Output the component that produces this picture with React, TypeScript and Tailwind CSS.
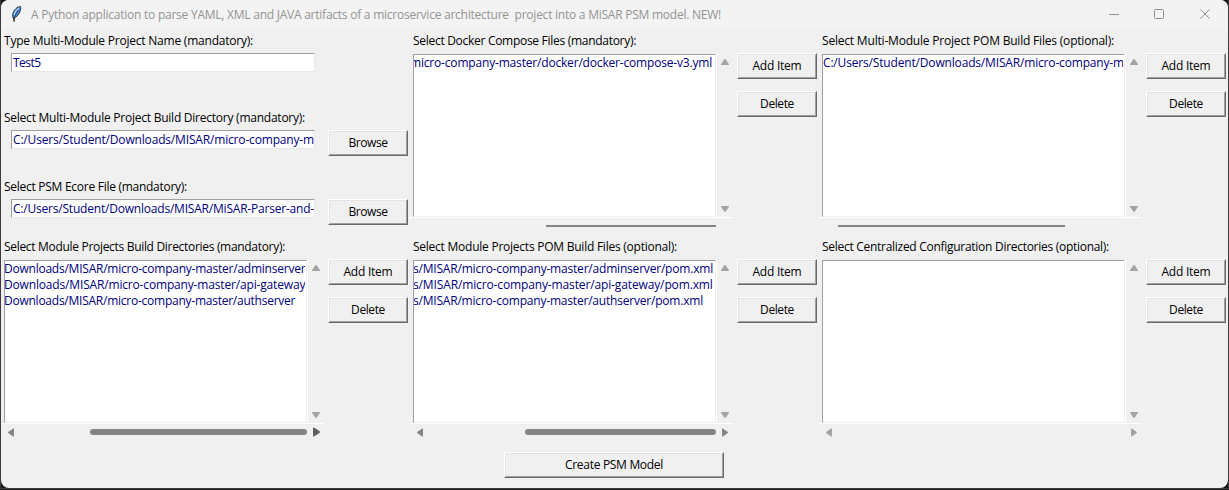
import type { ReactNode } from "react";

function Feather() {
  return (
    <svg width="16" height="18" viewBox="0 0 16 18" className="shrink-0">
      <path d="M12.4 1.5C9.4 1.6 5.6 5 4.9 8.6C4.5 10.6 4.6 12 5.4 13.4C8.2 12.4 10.8 9.8 12 6.6C12.7 4.7 12.9 2.6 12.4 1.5Z" fill="#4a8fdc" stroke="#1c2530" strokeWidth="0.9" />
      <path d="M11 3C8.8 4.4 6.8 7 6 10" fill="none" stroke="#a9cdf2" strokeWidth="1.1" />
      <path d="M10.4 5C8.8 7.6 7 10.8 6.1 13.4" fill="none" stroke="#1c2530" strokeWidth="0.7" />
      <path d="M5.9 12.6L6.2 16.6" stroke="#15181d" strokeWidth="1.3" />
    </svg>
  );
}

function TitleBar() {
  return (
    <header className="flex h-[30px] shrink-0 items-center bg-[#f3f3f3] pl-[7px]">
      <div className="pb-[3px]">
        <Feather />
      </div>
      <h1 className="ml-[7px] grow whitespace-pre text-[12px] leading-[18px] tracking-[-0.242px] text-[#949494]">
        {"A Python application to parse YAML, XML and JAVA artifacts of a microservice architecture  project into a MiSAR PSM model. NEW!"}
      </h1>
      <svg width="138" height="30" viewBox="0 0 138 30" fill="none" stroke="#8f8f8f" className="shrink-0">
        <path d="M19 14.5H29" />
        <rect x="64.5" y="9.5" width="9" height="9" rx="1" />
        <path d="M110.3 9.3L119.7 18.7M119.7 9.3L110.3 18.7" />
      </svg>
    </header>
  );
}

function Label({ children, tracking }: { children: ReactNode; tracking: string }) {
  return <div className={`h-[23px] shrink-0 pl-[3px] text-[12px] leading-[22px] whitespace-nowrap ${tracking}`}>{children}</div>;
}

function Button({ children, size, tracking }: { children: ReactNode; size: string; tracking: string }) {
  return (
    <button
      className={`block h-[26px] shrink-0 border border-t-white border-r-[#696969] border-b-[#696969] border-l-white ${size}`}
    >
      <span
        className={`block h-[24px] border border-t-[#e3e3e3] border-r-[#a0a0a0] border-b-[#a0a0a0] border-l-[#e3e3e3] text-center text-[12px] leading-[22px] ${tracking}`}
      >
        {children}
      </span>
    </button>
  );
}

function Entry({ value, tracking, browse }: { value: string; tracking: string; browse?: boolean }) {
  return (
    <div className="flex pl-[10px]">
      <div className="h-[19px] w-[304px] border border-t-[#a0a0a0] border-r-[#e9e9e9] border-b-[#e9e9e9] border-l-[#a0a0a0] bg-white">
        <div className={`h-[17px] overflow-hidden pl-[1px] text-[12px] leading-[18px] whitespace-nowrap text-[#000080] ${tracking}`}>{value}</div>
      </div>
      {browse && (
        <div className="ml-[13px]">
          <Button size="w-[80px]" tracking="tracking-[-0.45px]">Browse</Button>
        </div>
      )}
    </div>
  );
}

const arrows = {
  up: "M4.2 0.5Q5 -0.3 5.8 0.5L9 5.2Q9.2 6 8.4 6H1.6Q0.8 6 1 5.2Z",
  down: "M4.2 5.5Q5 6.3 5.8 5.5L9 0.8Q9.2 0 8.4 0H1.6Q0.8 0 1 0.8Z",
  left: "M0.5 3.7Q-0.3 4.5 0.5 5.3L5.2 8.5Q6 8.8 6 8V1Q6 0.2 5.2 0.5Z",
  right: "M5.5 3.7Q6.3 4.5 5.5 5.3L0.8 8.5Q0 8.8 0 8V1Q0 0.2 0.8 0.5Z",
};

function VArrow({ dir }: { dir: "up" | "down" }) {
  return (
    <svg width="10" height="6" viewBox="0 0 10 6" fill="#a3a3a3">
      <path d={arrows[dir]} />
    </svg>
  );
}

function HArrow({ dir, color, size }: { dir: "left" | "right"; color: string; size: string }) {
  return (
    <svg viewBox="0 0 6 9" preserveAspectRatio="none" className={`shrink-0 ${color} ${size}`}>
      <path d={arrows[dir]} />
    </svg>
  );
}

type Item = { text: string; tracking: string };

function ListPanel({
  label,
  labelTracking,
  items,
  offset,
  children,
}: {
  label: string;
  labelTracking: string;
  items: Item[];
  offset: string;
  children?: ReactNode;
}) {
  return (
    <section className="flex h-[206px] flex-col">
      <Label tracking={labelTracking}>{label}</Label>
      <div className="flex">
        <div className="w-[323px]">
          <div className="flex h-[165px] border-b border-white pl-[1px]">
            <div className="mt-px ml-[2px] h-[163px] w-[303px] border border-t-[#a0a0a0] border-r-[#efefef] border-b-[#efefef] border-l-[#a0a0a0] bg-white pr-px">
              <ul className="h-full overflow-hidden text-[12px] leading-[16px] whitespace-nowrap text-[#000080]">
                {items.map((item) => (
                  <li key={item.text} className={`h-[16px] ${offset} ${item.tracking}`}>
                    {item.text}
                  </li>
                ))}
              </ul>
            </div>
            <div className="flex h-[164px] w-[16px] flex-col items-center justify-between border-l border-white pt-[6px] pb-[5px]">
              <VArrow dir="up" />
              <VArrow dir="down" />
            </div>
          </div>
          {children}
        </div>
        <div className="ml-[4px] flex flex-col gap-3">
          <Button size="w-[80px]" tracking="tracking-[-0.234px]">Add Item</Button>
          <Button size="w-[80px]" tracking="tracking-[-0.4px]">Delete</Button>
        </div>
      </div>
    </section>
  );
}

function HScroll({
  thumb,
  arrow = "fill-[#858585]",
  right = "fill-[#858585]",
  rightSize = "h-[9px] w-[6px] mr-[5px]",
}: {
  thumb?: string;
  arrow?: string;
  right?: string;
  rightSize?: string;
}) {
  return (
    <div className="flex h-[16px] items-center pl-[7px]">
      <HArrow dir="left" color={arrow} size="h-[9px] w-[6px]" />
      <div className="flex w-[293px] justify-end">{thumb && <div className={`h-[6px] rounded-full bg-[#858585] ${thumb}`} />}</div>
      <div className="flex grow justify-end">
        <HArrow dir="right" color={right} size={rightSize} />
      </div>
    </div>
  );
}

export default function App() {
  return (
    <div className="h-[490px] w-[1229px] overflow-hidden bg-[#1b191b] font-['Open_Sans','Noto_Sans',sans-serif] text-black">
      <div className="flex h-[489px] border-r border-b border-l border-[#3b3b3b]">
        <main className="flex h-[488px] w-[1227px] flex-col overflow-hidden rounded-[8px] bg-[#f0f0f0]">
          <TitleBar />
          <div className="grid grid-cols-[409px_409px_409px]">
            <div className="h-[206px]">
              <div className="h-[77px]">
                <Label tracking="tracking-[-0.221px]">Type Multi-Module Project Name (mandatory):</Label>
                <Entry value="Test5" tracking="tracking-[-0.5px]" />
              </div>
              <div className="h-[69px]">
                <Label tracking="tracking-[-0.241px]">Select Multi-Module Project Build Directory (mandatory):</Label>
                <Entry value="C:/Users/Student/Downloads/MISAR/micro-company-m" tracking="tracking-[-0.168px]" browse />
              </div>
              <Label tracking="tracking-[-0.272px]">Select PSM Ecore File (mandatory):</Label>
              <Entry value="C:/Users/Student/Downloads/MISAR/MiSAR-Parser-and-" tracking="tracking-[-0.205px]" browse />
            </div>
            <ListPanel
              label="Select Docker Compose Files (mandatory):"
              labelTracking="tracking-[-0.29px]"
              offset="-ml-[4px]"
              items={[{ text: "micro-company-master/docker/docker-compose-v3.yml", tracking: "tracking-[-0.18px]" }]}
            >
              <div className="flex h-[16px] items-center justify-end pr-[17px]">
                <div className="h-[2px] w-[170px] bg-[#858585]" />
              </div>
            </ListPanel>
            <ListPanel
              label="Select Multi-Module Project POM Build Files (optional):"
              labelTracking="tracking-[-0.195px]"
              offset="ml-0"
              items={[{ text: "C:/Users/Student/Downloads/MISAR/micro-company-m", tracking: "tracking-[-0.168px]" }]}
            >
              <div className="flex h-[16px] items-center pl-[19px]">
                <div className="h-[2px] w-[227px] bg-[#858585]" />
              </div>
            </ListPanel>
            <ListPanel
              label="Select Module Projects Build Directories (mandatory):"
              labelTracking="tracking-[-0.309px]"
              offset="-ml-[1px]"
              items={[
                { text: "Downloads/MISAR/micro-company-master/adminserver", tracking: "tracking-[-0.235px]" },
                { text: "Downloads/MISAR/micro-company-master/api-gateway", tracking: "tracking-[-0.165px]" },
                { text: "Downloads/MISAR/micro-company-master/authserver", tracking: "tracking-[-0.245px]" },
              ]}
            >
              <HScroll thumb="w-[217px]" right="fill-[#606060]" rightSize="h-[10px] w-[7px] mr-[4px]" />
            </ListPanel>
            <ListPanel
              label="Select Module Projects POM Build Files (optional):"
              labelTracking="tracking-[-0.242px]"
              offset="-ml-[1px]"
              items={[
                { text: "s/MISAR/micro-company-master/adminserver/pom.xml", tracking: "tracking-[-0.196px]" },
                { text: "s/MISAR/micro-company-master/api-gateway/pom.xml", tracking: "tracking-[-0.13px]" },
                { text: "s/MISAR/micro-company-master/authserver/pom.xml", tracking: "tracking-[-0.203px]" },
              ]}
            >
              <HScroll thumb="w-[191px]" />
            </ListPanel>
            <ListPanel
              label="Select Centralized Configuration Directories (optional):"
              labelTracking="tracking-[-0.282px]"
              offset="ml-0"
              items={[]}
            >
              <HScroll arrow="fill-[#a3a3a3]" right="fill-[#a3a3a3]" />
            </ListPanel>
          </div>
          <div className="flex justify-center pt-[10px] pr-px">
            <Button size="w-[220px]" tracking="tracking-[-0.303px]">Create PSM Model</Button>
          </div>
        </main>
      </div>
    </div>
  );
}
